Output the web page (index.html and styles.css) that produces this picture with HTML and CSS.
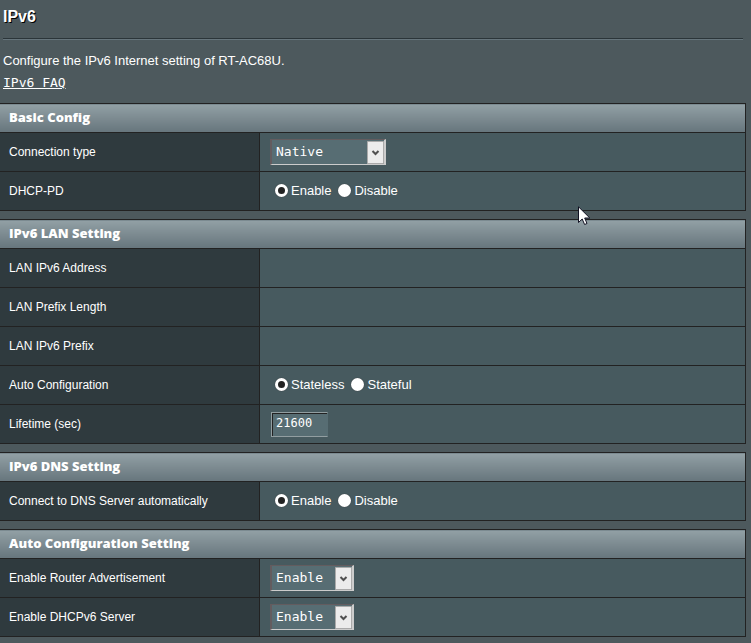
FILE: index.html
```html
<!DOCTYPE html>
<html lang="en">

<head>
	<meta charset="UTF-8">
	<meta name="viewport" content="width=device-width, initial-scale=1.0">
	<title>IPv6</title>

	<link rel="stylesheet" href="styles.css">

</head>

<body>

	<form class="main">

		<div class="head">
			<h1>IPv6</h1>
			<hr>
			<p>Configure the IPv6 Internet setting of RT-AC68U.</p>
			<a class="faq" href="#">IPv6 FAQ</a>
		</div>

		<table class="form_table">
			<colgroup><col class="name"><col></colgroup>
			<thead>
				<tr><td colspan="2">Basic Config</td></tr>
			</thead>
			<tbody>
				<tr>
					<th><label for="ipv6_service">Connection type</label></th>
					<td>
						<select id="ipv6_service" class="option option_wide">
							<option>Native</option>
						</select>
					</td>
				</tr>
				<tr>
					<th>DHCP-PD</th>
					<td>
						<div class="radios">
							<input type="radio" id="pd_on" name="dhcp_pd" checked><label for="pd_on">Enable</label>
							<input type="radio" id="pd_off" name="dhcp_pd"><label for="pd_off">Disable</label>
						</div>
					</td>
				</tr>
			</tbody>
		</table>

		<table class="form_table">
			<colgroup><col class="name"><col></colgroup>
			<thead>
				<tr><td colspan="2">IPv6 LAN Setting</td></tr>
			</thead>
			<tbody>
				<tr>
					<th>LAN IPv6 Address</th>
					<td></td>
				</tr>
				<tr>
					<th>LAN Prefix Length</th>
					<td></td>
				</tr>
				<tr>
					<th>LAN IPv6 Prefix</th>
					<td></td>
				</tr>
				<tr>
					<th>Auto Configuration</th>
					<td>
						<div class="radios">
							<input type="radio" id="stateless" name="autoconf" checked><label for="stateless">Stateless</label>
							<input type="radio" id="stateful" name="autoconf"><label for="stateful">Stateful</label>
						</div>
					</td>
				</tr>
				<tr>
					<th><label for="lifetime">Lifetime (sec)</label></th>
					<td><input type="text" id="lifetime" class="number" value="21600"></td>
				</tr>
			</tbody>
		</table>

		<table class="form_table">
			<colgroup><col class="name"><col></colgroup>
			<thead>
				<tr><td colspan="2">IPv6 DNS Setting</td></tr>
			</thead>
			<tbody>
				<tr>
					<th>Connect to DNS Server automatically</th>
					<td>
						<div class="radios">
							<input type="radio" id="dns_on" name="dns" checked><label for="dns_on">Enable</label>
							<input type="radio" id="dns_off" name="dns"><label for="dns_off">Disable</label>
						</div>
					</td>
				</tr>
			</tbody>
		</table>

		<table class="form_table">
			<colgroup><col class="name"><col></colgroup>
			<thead>
				<tr><td colspan="2">Auto Configuration Setting</td></tr>
			</thead>
			<tbody>
				<tr>
					<th><label for="radvd">Enable Router Advertisement</label></th>
					<td>
						<select id="radvd" class="option">
							<option>Enable</option>
							<option>Disable</option>
						</select>
					</td>
				</tr>
				<tr>
					<th><label for="dhcp6s">Enable DHCPv6 Server</label></th>
					<td>
						<select id="dhcp6s" class="option">
							<option>Enable</option>
							<option>Disable</option>
						</select>
					</td>
				</tr>
			</tbody>
		</table>

	</form>

	<svg class="pointer" width="13" height="20" viewBox="0 0 13 20" aria-hidden="true">
		<path d="M.5 .8V16.5L4.2 13L6.6 18.5L9 17.5L6.7 12H11.8Z" fill="#fff" stroke="#111122" />
	</svg>

</body>

</html>
```
FILE: styles.css
```css
* {
	box-sizing: border-box;
}

body {
	margin: 0;
	background: #4d595d;
	color: #fff;
	font-family: "Liberation Sans", Arial, sans-serif;
	font-size: 13px;
	line-height: 16px;
}

.main {
	padding-right: 5px;
}

.head {
	padding: 8px 3px 12px;
}

h1 {
	margin: 0;
	font-size: 16px;
	line-height: 18px;
	text-shadow: 1px 1px 0 #000;
}

hr {
	height: 2px;
	margin: 12px 0 13px;
	border: 0;
	border-top: 1px solid #2b3539;
	border-bottom: 1px solid #66757c;
}

p {
	margin: 0 0 6px;
}

.faq {
	display: block;
	width: max-content;
	color: #fff;
	font-family: "DejaVu Sans Mono", monospace;
}

.form_table {
	width: calc(100% + 1px);
	margin: 0 0 8px -1px;
	border-collapse: collapse;
	table-layout: fixed;
}

.name {
	width: 260px;
}

.form_table td,
.form_table th {
	height: 39px;
	padding: 0 9px;
	border: 1px solid #222;
	background: #475a5f;
}

.form_table th {
	background: #2f3a3e;
	font-size: 12px;
	font-weight: 400;
	text-align: left;
}

.form_table thead td {
	height: 29px;
	padding-bottom: 2px;
	background: linear-gradient(#92a0a5, #66757c);
	font-family: "Open Sans", sans-serif;
	font-weight: 800;
}

.option {
	display: block;
	width: 84px;
	height: 26px;
	margin-left: 1px;
	padding: 0 22px 2px 4px;
	border: 2px solid;
	border-color: #635c5f #ccc #ccc #635c5f;
	border-width: 1px 2px 1px 2px;
	border-radius: 0;
	appearance: none;
	background: #576d73 url("data:image/svg+xml,%3Csvg xmlns='http://www.w3.org/2000/svg' width='17' height='23'%3E%3Cpath d='M.5 .5h16v22H.5z' fill='%23ececec' stroke='%23aaa'/%3E%3Cpath d='M5.5 10l3 3 3-3' fill='none' stroke='%23505050' stroke-width='2'/%3E%3C/svg%3E") no-repeat right center;
	color: #fff;
	font-family: "DejaVu Sans Mono", monospace;
	font-size: 13px;
}

.option_wide {
	width: 116px;
}

.radios {
	display: flex;
	align-items: center;
	padding-left: 6px;
}

.radios input {
	width: 13px;
	height: 13px;
	margin: 0 3px 2px 0;
	border: 3px solid #fff;
	border-radius: 50%;
	appearance: none;
	background: #fff;
	box-shadow: 0 0 1px #333;
}

.radios input:checked {
	background: #222;
}

.radios label {
	margin-right: 7px;
}

.number {
	display: block;
	width: 57px;
	height: 25px;
	margin-left: 2px;
	padding: 0 4px 2px;
	border: 1px solid #929ea1;
	border-right-color: #576d73;
	background: #576d73;
	box-shadow: inset 1px 1px 0 #222;
	color: #fff;
	font-family: "DejaVu Sans Mono", monospace;
	font-size: 12px;
}

/* mouse cursor over the page */
.pointer {
	position: absolute;
	top: 206px;
	left: 578px;
}
```
